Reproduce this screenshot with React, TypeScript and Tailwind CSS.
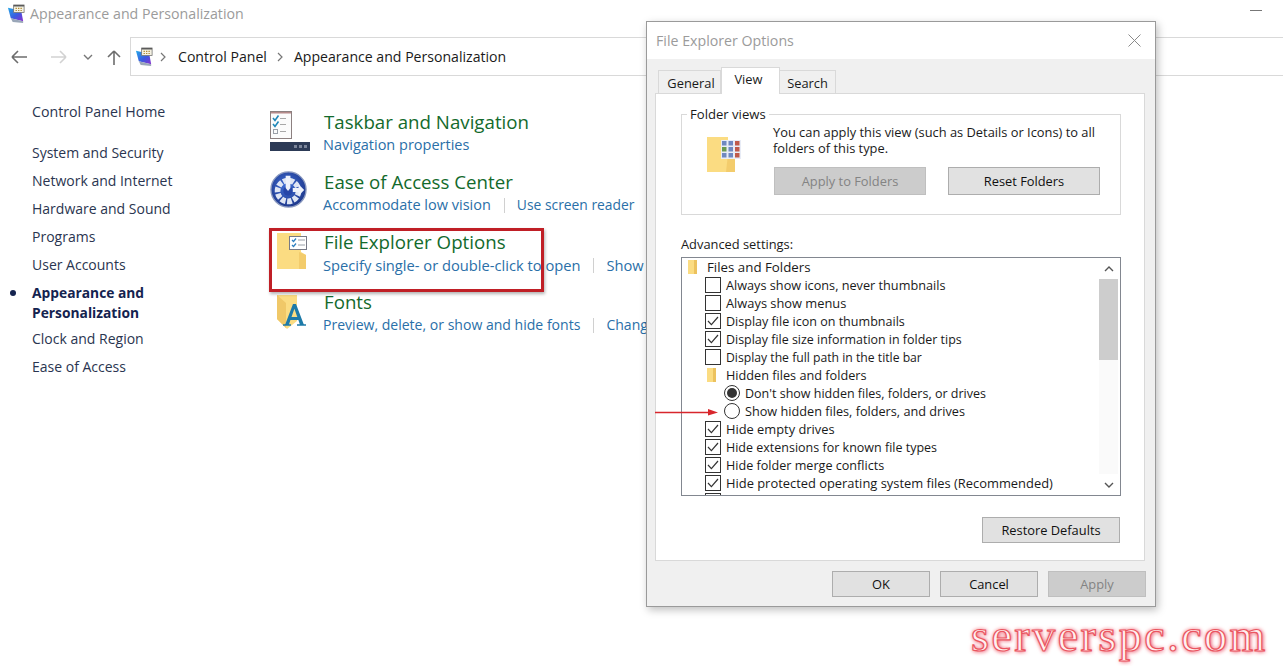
import React from "react";

const F = "font-['Open_Sans','Noto_Sans',sans-serif]";

function CpIcon() {
  return (
    <svg width="19" height="20" viewBox="0 0 20 21">
      <defs>
        <linearGradient id="cp" x1="0" y1="0" x2="1" y2="1">
          <stop offset="0" stopColor="#25a8e8" />
          <stop offset="0.55" stopColor="#3a5be0" />
          <stop offset="1" stopColor="#8a2fd0" />
        </linearGradient>
      </defs>
      <path d="M1 4 L15 7 L17 18 L4 15 Z" fill="url(#cp)" />
      <path d="M4 15 L17 18 L17 20 L6 19 Z" fill="#9aa7b8" />
      <rect x="7" y="1" width="11" height="8" fill="#f4f1e2" stroke="#6f6f6f" strokeWidth="0.8" />
      <rect x="7" y="1" width="11" height="1.6" fill="#5a5a5a" />
      <path d="M9 4h1.4v1.2H9zM11.6 4H13v1.2h-1.4zM14.2 4h1.4v1.2h-1.4zM9 6.2h1.4v1.2H9zM11.6 6.2H13v1.2h-1.4zM14.2 6.2h1.4v1.2h-1.4z" fill="#b08a30" />
    </svg>
  );
}

function TaskbarIcon() {
  return (
    <svg width="42" height="42" viewBox="0 0 42 42">
      <rect x="0.5" y="0.5" width="21" height="27" fill="#fbfbfb" stroke="#8c8080" />
      <rect x="1" y="1" width="20" height="1.5" fill="#b58a8a" />
      <path d="M3 7 L5 9.5 L8.5 4.5 M3 13 L5 15.5 L8.5 10.5" fill="none" stroke="#1f87b8" strokeWidth="1.6" />
      <rect x="3.5" y="18.5" width="4" height="4" fill="none" stroke="#9aa0a8" />
      <path d="M10 7.5h6M10 13.5h6M10 20.5h6" stroke="#a8a8a8" />
      <rect x="0" y="31" width="40" height="9" fill="#2c3a56" />
      <path d="M24 34h3v3h-3zM29 34h3v3h-3zM34 34h3v3h-3z" fill="#7a8499" />
    </svg>
  );
}

function EaseIcon() {
  return (
    <svg width="38" height="38" viewBox="0 0 40 40">
      <defs>
        <radialGradient id="ea" cx="0.45" cy="0.4" r="0.65">
          <stop offset="0" stopColor="#3f6fd8" />
          <stop offset="1" stopColor="#1c3486" />
        </radialGradient>
      </defs>
      <circle cx="19.5" cy="19.5" r="18.5" fill="url(#ea)" stroke="#8b9ac0" strokeWidth="1.4" />
      <circle cx="19" cy="21" r="11" fill="none" stroke="#dfe6f4" strokeWidth="6" strokeDasharray="5 1.6" />
      <circle cx="19" cy="21" r="5" fill="#2646a8" />
      <path d="M16.5 5 h5 v13 l-2.5 3 l-2.5-3z" fill="#eef2fb" />
      <path d="M24 18 h6 v-4 l6 6 l-6 6 v-4 h-6z" fill="#eef2fb" />
    </svg>
  );
}

function FolderIcon() {
  return (
    <svg width="30" height="37" viewBox="0 0 30 37">
      <path d="M0 0 H24 V19 L29 22 V36 H0 Z" fill="#fbdc82" />
      <path d="M22 19 V36 H29 V22 Z" fill="#f3cc6c" />
      <rect x="12.5" y="3.5" width="17" height="13" fill="#fff" stroke="#777a86" />
      <path d="M15 7 l1.5 1.5 l2.5-3 M15 12 l1.5 1.5 l2.5-3" fill="none" stroke="#2f80c0" strokeWidth="1.3" />
      <path d="M21 7h7M21 12h7" stroke="#9aa0a8" />
    </svg>
  );
}

function FontsIcon() {
  return (
    <svg width="30" height="35" viewBox="0 0 30 35">
      <path d="M0 0 H20 V26 L10 34 L0 24 Z" fill="#fbdc82" />
      <path d="M0 0 L9 8 V33 L0 24 Z" fill="#f0c868" />
      <path d="M8 30 L16 9 H19 L27 30 H23 L21.4 25 H13.4 L11.8 30 Z M14.5 22 H20.3 L17.4 13.8 Z" fill="#1d7aa8" fillRule="evenodd" />
      <path d="M6 30h8M20 30h9" stroke="#1d7aa8" strokeWidth="1.4" />
    </svg>
  );
}

function FolderViewIcon() {
  return (
    <svg width="36" height="38" viewBox="0 0 36 38">
      <path d="M1 1 H22 V36 H1 Z" fill="#fbdc82" />
      <path d="M22 18 L29 21 V36 H20 Z" fill="#f3cc6c" />
      <rect x="15" y="4" width="20" height="19" fill="#e8ecf6" />
      {[0, 1, 2].map((r) =>
        [0, 1, 2].map((c) => (
          <rect
            key={`${r}${c}`}
            x={16 + c * 6.5}
            y={5 + r * 6}
            width="4.5"
            height="4.5"
            fill={c === 2 ? "#c05a4a" : r === 1 && c === 0 ? "#6a9a50" : "#6f88c0"}
          />
        )),
      )}
    </svg>
  );
}

function SmallFolder() {
  return (
    <svg width="10" height="14" viewBox="0 0 10 14">
      <path d="M0 0 H8 V14 H0 Z" fill="#fbdc82" />
      <path d="M6 0 H9 V14 H6 Z" fill="#ecc25e" />
    </svg>
  );
}

function Btn({ w, h = "h-[26px]", disabled, children }: { w: string; h?: string; disabled?: boolean; children: React.ReactNode }) {
  return disabled ? (
    <div className={`${w} ${h} pt-[2px] flex items-center justify-center bg-[#cccccc] border border-[#bfbfbf] text-[#838383]`}>{children}</div>
  ) : (
    <div className={`${w} ${h} pt-[2px] flex items-center justify-center bg-[#e1e1e1] border border-[#adadad] text-[#111]`}>{children}</div>
  );
}

function Check({ on }: { on?: boolean }) {
  return (
    <span className="w-4 h-4 border border-[#333] bg-white shrink-0 flex items-center justify-center">
      {on && (
        <svg width="12" height="10" viewBox="0 0 12 10">
          <path d="M1 5 L4.4 8.6 L11 1" fill="none" stroke="#333" strokeWidth="1.2" />
        </svg>
      )}
    </span>
  );
}

function Row({ on, size, children }: { on?: boolean; size?: string; children?: React.ReactNode }) {
  return (
    <div className="h-[18px] flex items-center pl-[23px] gap-[5px] whitespace-nowrap">
      <Check on={on} />
      <span className={`pt-[2px] ${size ?? ""}`}>{children}</span>
    </div>
  );
}

function Radio({ on, size, children }: { on?: boolean; size?: string; children: React.ReactNode }) {
  return (
    <div className="h-[18px] flex items-center pl-[42px] gap-[5px] whitespace-nowrap">
      <span className="w-4 h-4 rounded-full border border-[#333] bg-white shrink-0 flex items-center justify-center">
        {on && <span className="w-2.5 h-2.5 rounded-full bg-[#333]" />}
      </span>
      <span className={`pt-[2px] ${size ?? ""}`}>{children}</span>
    </div>
  );
}

function Item({ icon, title, links, size }: { icon: React.ReactNode; title: string; links: [string, string?][]; size: string }) {
  return (
    <div className="h-[60px] flex">
      <div className="w-[54px] shrink-0 pl-[1px]">{icon}</div>
      <div className="whitespace-nowrap">
        <div className="text-[18.7px] leading-[28px] text-[#136a2c] pl-[1px]">{title}</div>
        <div className={`flex items-center ${size} leading-[20px] text-[#2a6fa8] -mt-[1px]`}>
          {links.map(([l, cls], i) => (
            <React.Fragment key={l}>
              {i > 0 && <span className="w-px h-[15px] bg-[#d0d0d0] ml-[13px] mr-[12px]" />}
              <span className={cls}>{l}</span>
            </React.Fragment>
          ))}
        </div>
      </div>
    </div>
  );
}

function Nav({ children, bold }: { children: React.ReactNode; bold?: boolean }) {
  return <div className={`leading-[20px] mb-2 ${bold ? "text-[13.8px] font-bold text-[#14234f] mb-[6px]" : "text-[14px] text-[#2a3550]"}`}>{children}</div>;
}

export default function App() {
  return (
    <div className={`relative w-[1283px] h-[666px] overflow-hidden bg-white ${F}`}>
      {/* window title */}
      <div className="h-[28px] flex items-center pl-[7px] gap-[4px] relative">
        <CpIcon />
        <span className="text-[14.2px] text-[#9b9b9b] -mt-[1px]">Appearance and Personalization</span>
        <span className="absolute left-[1250px] top-[10px] w-[12px] h-px bg-[#777]" />
      </div>
      {/* nav bar */}
      <div className="h-[39px] flex mt-[9px]">
        <div className="w-[130px] shrink-0 h-[39px] flex items-center">
          <svg width="130" height="39" viewBox="0 0 130 39">
            <path d="M12 20 H27 M12 20 L18 14 M12 20 L18 26" fill="none" stroke="#6d6d6d" strokeWidth="1.6" />
            <path d="M51 20 H66 M66 20 L60 14 M66 20 L60 26" fill="none" stroke="#d2d2d2" strokeWidth="1.6" />
            <path d="M84 18 L88 22 L92 18" fill="none" stroke="#777" strokeWidth="1.4" />
            <path d="M114 28 V14 M114 14 L108 20 M114 14 L120 20" fill="none" stroke="#6d6d6d" strokeWidth="1.6" />
          </svg>
        </div>
        <div className="flex-1 h-[39px] border border-r-0 border-[#d9d9d9] flex items-center pl-[4px] text-[14.1px] text-[#1a1a1a]">
          <CpIcon />
          <svg width="7" height="10" viewBox="0 0 7 10" className="ml-[6px] mr-[11px]"><path d="M1 1 L5 5 L1 9" fill="none" stroke="#777" strokeWidth="1.2" /></svg>
          <span>Control Panel</span>
          <svg width="7" height="10" viewBox="0 0 7 10" className="ml-[10px] mr-[10px]"><path d="M1 1 L5 5 L1 9" fill="none" stroke="#777" strokeWidth="1.2" /></svg>
          <span>Appearance and Personalization</span>
        </div>
      </div>
      {/* main */}
      <div className="flex pt-[26px]">
        <div className="w-[269px] shrink-0 pl-[32px] relative">
          <div className="text-[14.2px] leading-[20px] text-[#2a3550] mb-[21px]">Control Panel Home</div>
          <Nav>System and Security</Nav>
          <Nav>Network and Internet</Nav>
          <Nav>Hardware and Sound</Nav>
          <Nav>Programs</Nav>
          <Nav>User Accounts</Nav>
          <div className="relative">
            <span className="absolute -left-[22px] top-[7px] w-[6px] h-[6px] rounded-full bg-[#14234f]" />
            <Nav bold>
              Appearance and
              <br />
              Personalization
            </Nav>
          </div>
          <Nav>Clock and Region</Nav>
          <Nav>Ease of Access</Nav>
        </div>
        <div className="flex-1 mt-[6px]">
          <Item size="text-[14.5px]" icon={<div className="pt-[3px]"><TaskbarIcon /></div>} title="Taskbar and Navigation" links={[["Navigation properties"]]} />
          <Item size="text-[14.5px]" icon={<div className="pt-[3px]"><EaseIcon /></div>} title="Ease of Access Center" links={[["Accommodate low vision"], ["Use screen reader", "text-[13.85px]"]]} />
          <Item size="text-[14.7px]" icon={<div className="pl-[7px] pt-[5px]"><FolderIcon /></div>} title="File Explorer Options" links={[["Specify single- or double-click to open"], ["Show"]]} />
          <Item size="text-[14.05px]" icon={<div className="pl-[7px] pt-[7px]"><FontsIcon /></div>} title="Fonts" links={[["Preview, delete, or show and hide fonts"], ["Chang"]]} />
        </div>
      </div>

      {/* red highlight */}
      <div className="absolute left-[269px] top-[228px] w-[275px] h-[64px] border-[3px] border-[#c01f26] shadow-[1px_2px_3px_rgba(0,0,0,0.3)]" />

      {/* dialog */}
      <div className="absolute left-[646px] top-[21px] w-[510px] h-[586px] bg-[#f0f0f0] border border-[#9a9a9a] shadow-[2px_3px_8px_rgba(0,0,0,0.25)] text-[12.85px] text-[#1a1a1a]">
        <div className="h-[37px] bg-white flex items-center justify-between pl-[9px] pr-[14px]">
          <span className="text-[14.2px] text-[#9b9b9b]">File Explorer Options</span>
          <svg width="13" height="13" viewBox="0 0 13 13"><path d="M0.5 0.5 L12.5 12.5 M12.5 0.5 L0.5 12.5" stroke="#8a8a8a" strokeWidth="1" /></svg>
        </div>
        <div className="pl-[8px] pr-[9px] pt-[8px]">
          <div className="flex items-end pl-[3px] h-[27px] relative z-10 -mb-px">
            <div className="w-[63px] h-[24px] pl-[3px] pt-[2px] border border-b-0 border-[#d9d9d9] flex items-center justify-center">General</div>
            <div className="w-[59px] h-[27px] bg-white border border-b-0 border-[#d9d9d9] flex items-center justify-center pb-[2px] pr-[4px]">View</div>
            <div className="w-[56px] h-[24px] pt-[2px] border border-b-0 border-l-0 border-[#d9d9d9] flex items-center justify-center">Search</div>
          </div>
          <div className="w-[490px] h-[468px] bg-white border border-[#d9d9d9] pl-[25px] pr-[23px] pt-[20px]">
            {/* folder views group */}
            <div className="relative h-[101px] border border-[#d9d9d9] flex">
              <span className="absolute left-[5px] -top-[9px] bg-white px-[3px] leading-[16px] text-[13.1px]">Folder views</span>
              <div className="w-[91px] shrink-0 pl-[24px] pt-[21px]"><FolderViewIcon /></div>
              <div className="pt-[9px]">
                <div className="leading-[16px] whitespace-nowrap">You can apply this view (such as Details or Icons) to all<br />folders of this type.</div>
                <div className="flex gap-[22px] mt-[11px] ml-[1px]">
                  <Btn w="w-[152px]" h="h-[28px]" disabled>Apply to Folders</Btn>
                  <Btn w="w-[152px]" h="h-[28px]">Reset Folders</Btn>
                </div>
              </div>
            </div>
            <div className="leading-[16px] mt-[21px] mb-[5px]">Advanced settings:</div>
            {/* list */}
            <div className="relative h-[239px] border border-[#828790] overflow-hidden">
              <div className="h-[18px] flex items-center pl-[6px] gap-[9px] whitespace-nowrap"><SmallFolder /><span className="pt-[2px] text-[13.3px]">Files and Folders</span></div>
              <Row size="text-[12.7px]">Always show icons, never thumbnails</Row>
              <Row>Always show menus</Row>
              <Row on size="text-[12.55px]">Display file icon on thumbnails</Row>
              <Row on size="text-[12.45px]">Display file size information in folder tips</Row>
              <Row size="text-[12.2px]">Display the full path in the title bar</Row>
              <div className="h-[18px] flex items-center pl-[25px] gap-[9px] whitespace-nowrap"><SmallFolder /><span className="pt-[2px] text-[12.7px]">Hidden files and folders</span></div>
              <Radio on size="text-[12.5px]">Don't show hidden files, folders, or drives</Radio>
              <Radio size="text-[12.7px]">Show hidden files, folders, and drives</Radio>
              <Row on>Hide empty drives</Row>
              <Row on size="text-[12.5px]">Hide extensions for known file types</Row>
              <Row on size="text-[12.6px]">Hide folder merge conflicts</Row>
              <Row on size="text-[12.9px]">Hide protected operating system files (Recommended)</Row>
              <Row />
              {/* scrollbar */}
              <div className="absolute right-[2px] top-0 bottom-0 w-[19px] bg-white flex flex-col">
                <div className="h-[21px] flex items-center justify-center">
                  <svg width="10" height="6" viewBox="0 0 10 6"><path d="M1 5 L5 1 L9 5" fill="none" stroke="#555" strokeWidth="1.4" /></svg>
                </div>
                <div className="h-[81px] bg-[#cdcdcd]" />
                <div className="flex-1 bg-[#fafafa]" />
                <div className="h-[21px] flex items-center justify-center">
                  <svg width="10" height="6" viewBox="0 0 10 6"><path d="M1 1 L5 5 L9 1" fill="none" stroke="#555" strokeWidth="1.4" /></svg>
                </div>
              </div>
            </div>
            <div className="flex justify-end mt-[21px] mr-[1px]">
              <Btn w="w-[138px]">Restore Defaults</Btn>
            </div>
          </div>
          <div className="flex justify-end gap-[10px] pt-[10px]">
            <Btn w="w-[98px]">OK</Btn>
            <Btn w="w-[98px]">Cancel</Btn>
            <Btn w="w-[98px]" disabled>Apply</Btn>
          </div>
        </div>
      </div>

      {/* red arrow */}
      <svg className="absolute left-[654px] top-[406px]" width="66" height="12" viewBox="0 0 66 12">
        <path d="M1 6.5 H56" stroke="#d8262c" strokeWidth="1.6" />
        <path d="M54 3 L64 6.5 L54 9.5 Z" fill="#d8262c" />
      </svg>

      {/* watermark */}
      <div className="absolute left-[971px] top-[612px] font-['Liberation_Serif',serif] text-[46px] leading-[48px] tracking-[2.5px] text-[#fff0f0] [-webkit-text-stroke:1.2px_#ea5560] [text-shadow:0_0_4px_#f06070,1px_1px_4px_#f08090]">
        serverspc.com
      </div>
    </div>
  );
}
